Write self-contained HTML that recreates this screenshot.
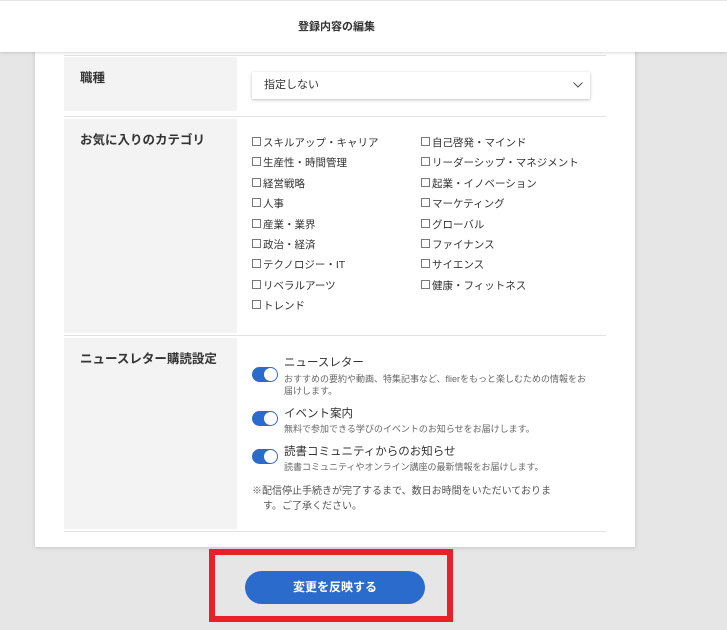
<!DOCTYPE html>
<html><head><meta charset="utf-8"><style>
*{margin:0;padding:0;box-sizing:border-box}
body{width:727px;height:630px;background:#e6e6e6;font-family:"Liberation Sans","Noto Sans CJK JP",sans-serif;color:#333;position:relative;overflow:hidden}
.a{position:absolute}
.hdr{left:0;top:0;width:727px;height:52px;background:#fff;box-shadow:0 1px 3px rgba(0,0,0,.15);font-size:11px;font-weight:bold;line-height:52px;z-index:2;border-top:1px solid #e4e4e4;padding-left:298px}
.card{left:35px;top:40px;width:600px;height:507px;background:#fff;box-shadow:0 1px 4px rgba(0,0,0,.15)}
.lab{left:64px;width:173px;background:#f3f3f3;font-size:12.5px;font-weight:bold;padding:10px 0 0 16px}
.ln{left:64px;width:542px;height:1px;background:#e2e2e2}
.cb{font-size:10.5px;color:#333;white-space:nowrap}
.cb:before{content:"";display:inline-block;width:7px;height:7px;border:1px solid #777;margin-right:2px;vertical-align:0px}
.tg{left:252px;width:26px;height:15px;border-radius:8px;background:#2b6bcc}
.tg:after{content:"";position:absolute;right:1px;top:1px;width:13px;height:13px;border-radius:50%;background:#fff}
.t1{font-size:11.5px;color:#333}
.t2{font-size:9px;color:#666;line-height:12px}
</style></head><body>
<div class="a hdr">登録内容の編集</div>
<div class="a card"></div>
<div class="a ln" style="top:55px"></div>
<div class="a lab" style="top:57px;height:54px">職種</div>
<div class="a" style="left:252px;top:72px;width:338px;height:27px;background:#fff;box-shadow:0 1px 3px rgba(0,0,0,.25);font-size:11px;line-height:27px;padding-left:12px">指定しない<svg style="position:absolute;right:7px;top:10px" width="10" height="6" viewBox="0 0 10 6"><path d="M0.5 0.5L5 5L9.5 0.5" fill="none" stroke="#555" stroke-width="1"/></svg></div>
<div class="a ln" style="top:116px"></div>
<div class="a lab" style="top:119px;height:214px">お気に入りのカテゴリ</div>
<div class="a ln" style="top:335px"></div>
<div class="a lab" style="top:338px;height:191px">ニュースレター購読設定</div>
<div class="a ln" style="top:531px"></div>

<div class="a cb" style="left:252px;top:135px">スキルアップ・キャリア</div>
<div class="a cb" style="left:252px;top:155px">生産性・時間管理</div>
<div class="a cb" style="left:252px;top:176px">経営戦略</div>
<div class="a cb" style="left:252px;top:196px">人事</div>
<div class="a cb" style="left:252px;top:217px">産業・業界</div>
<div class="a cb" style="left:252px;top:237px">政治・経済</div>
<div class="a cb" style="left:252px;top:257px">テクノロジー・IT</div>
<div class="a cb" style="left:252px;top:278px">リベラルアーツ</div>
<div class="a cb" style="left:252px;top:298px">トレンド</div>
<div class="a cb" style="left:421px;top:135px">自己啓発・マインド</div>
<div class="a cb" style="left:421px;top:155px">リーダーシップ・マネジメント</div>
<div class="a cb" style="left:421px;top:176px">起業・イノベーション</div>
<div class="a cb" style="left:421px;top:196px">マーケティング</div>
<div class="a cb" style="left:421px;top:217px">グローバル</div>
<div class="a cb" style="left:421px;top:237px">ファイナンス</div>
<div class="a cb" style="left:421px;top:257px">サイエンス</div>
<div class="a cb" style="left:421px;top:278px">健康・フィットネス</div>

<div class="a tg" style="top:367px"></div>
<div class="a t1" style="left:284px;top:354px">ニュースレター</div>
<div class="a t2" style="left:284px;top:373px;width:310px">おすすめの要約や動画、特集記事など、flierをもっと楽しむための情報をお届けします。</div>
<div class="a tg" style="top:411px"></div>
<div class="a t1" style="left:284px;top:405px">イベント案内</div>
<div class="a t2" style="left:284px;top:423px">無料で参加できる学びのイベントのお知らせをお届けします。</div>
<div class="a tg" style="top:449px"></div>
<div class="a t1" style="left:284px;top:443px">読書コミュニティからのお知らせ</div>
<div class="a t2" style="left:284px;top:461px">読書コミュニティやオンライン講座の最新情報をお届けします。</div>
<div class="a" style="left:252px;top:484px;width:318px;font-size:10px;color:#555;line-height:15px;padding-left:11px;text-indent:-11px">※配信停止手続きが完了するまで、数日お時間をいただいておりま<br>す。ご了承ください。</div>

<div class="a" style="left:209px;top:549px;width:244px;height:73px;border:6px solid #e8202a"></div>
<div class="a" style="left:245px;top:571px;width:180px;height:33px;border-radius:17px;background:#2b6bcc;color:#fff;font-size:12px;font-weight:bold;text-align:center;line-height:33px">変更を反映する</div>
</body></html>
